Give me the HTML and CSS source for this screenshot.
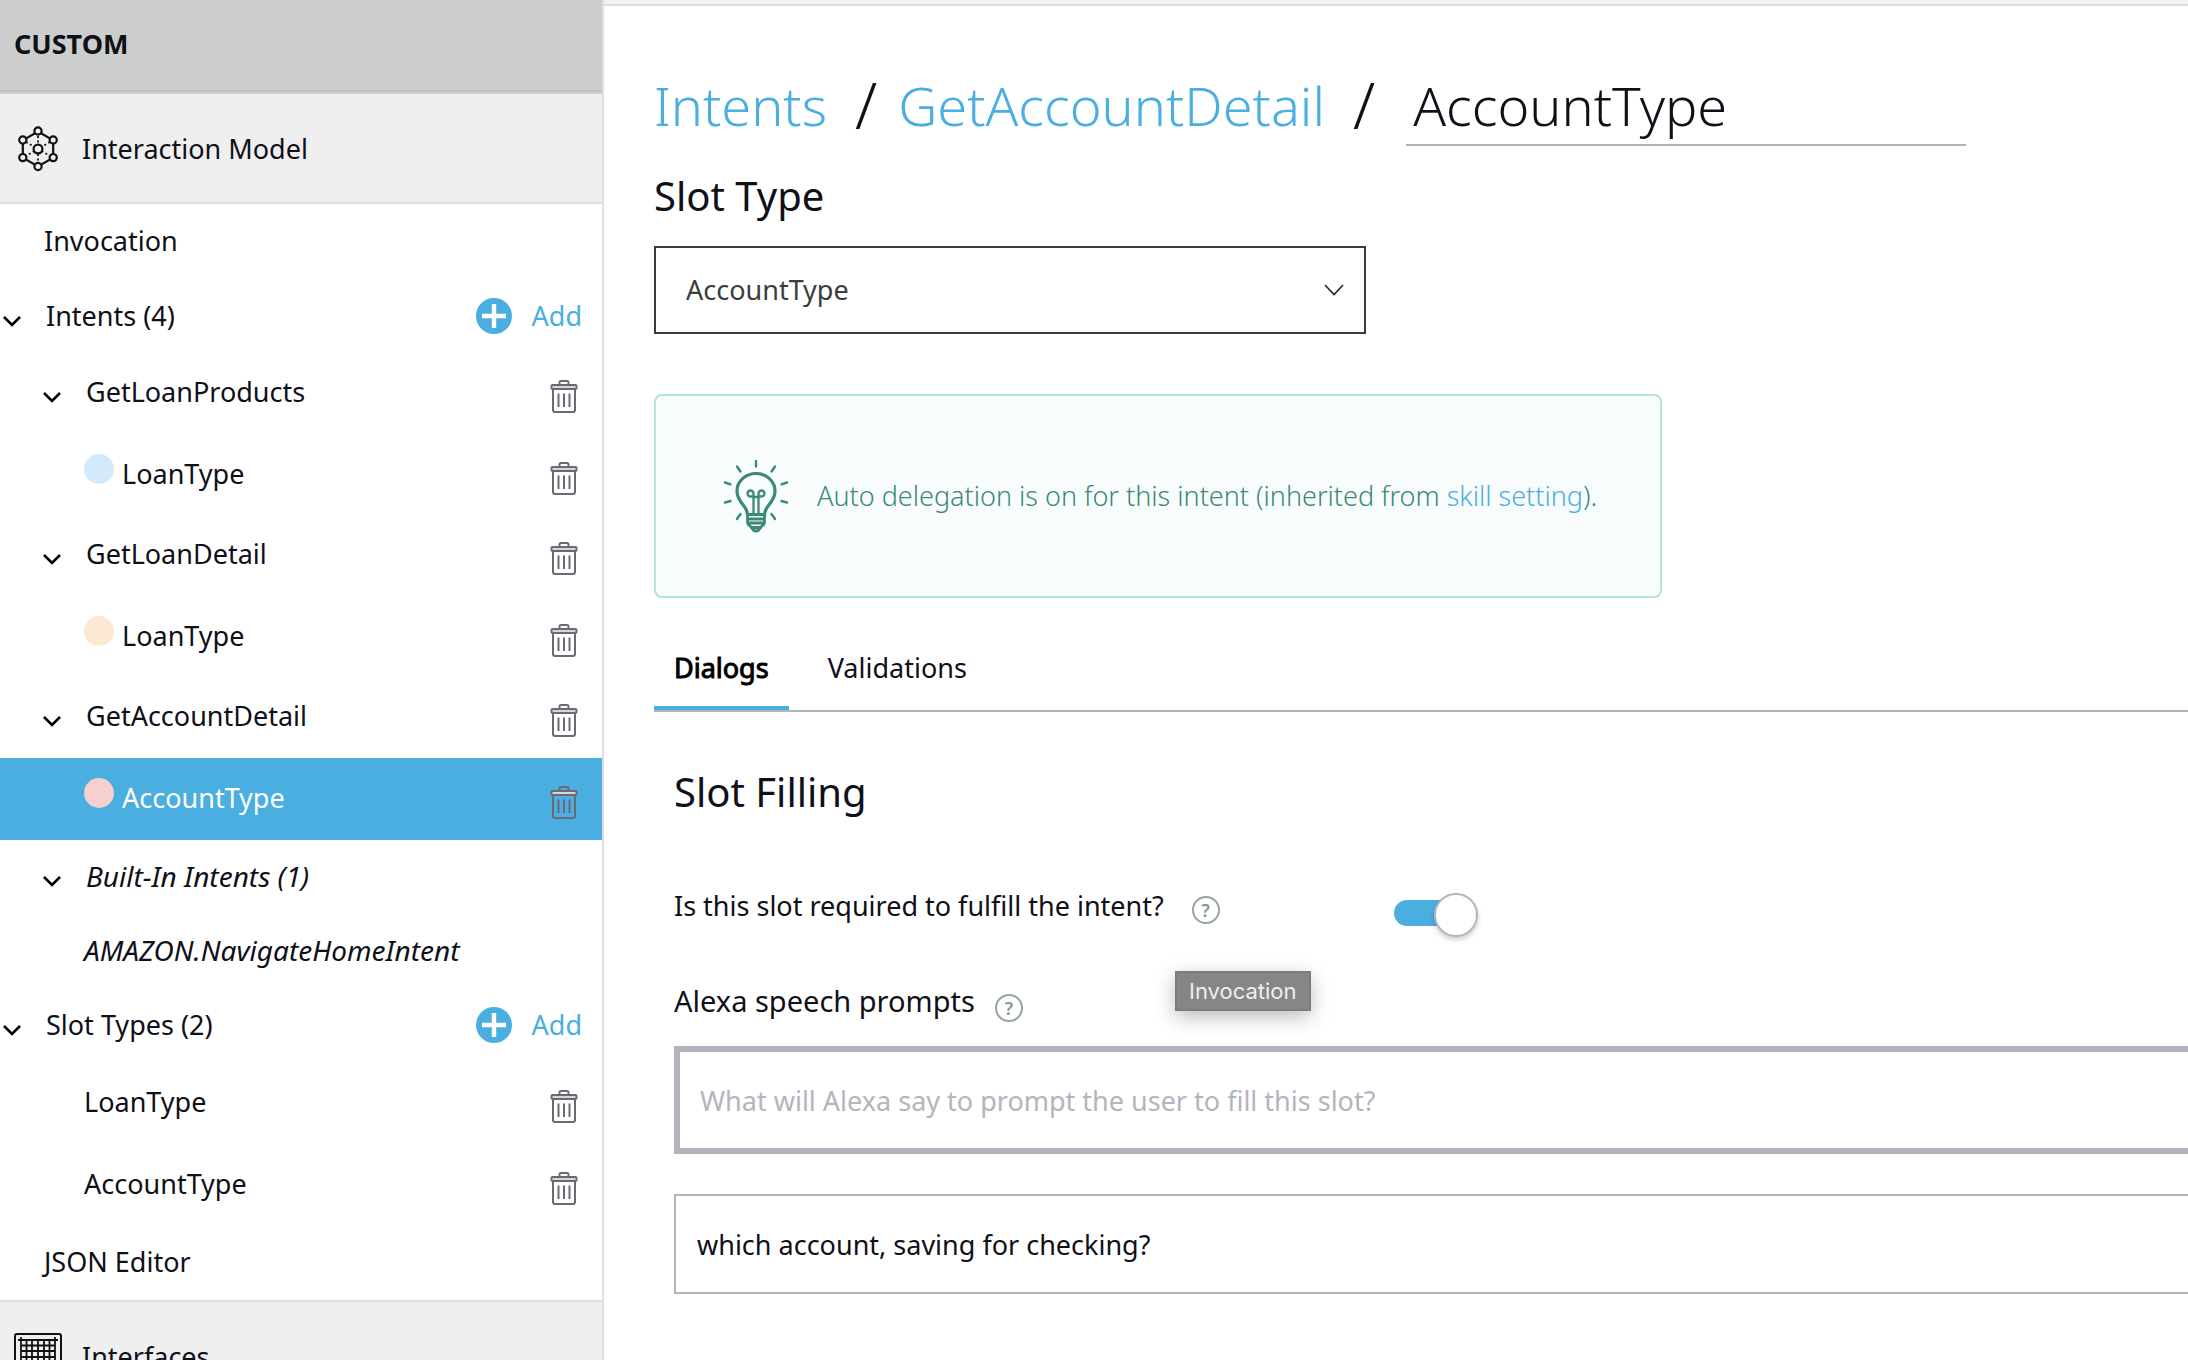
FILE: index.html
```html
<!DOCTYPE html>
<html lang="en">
<head>
<meta charset="utf-8">
<title>AccountType - Slot Type</title>
<link rel="stylesheet" href="styles.css">
</head>
<body>
<svg class="sprite" aria-hidden="true">
  <symbol id="chevron" viewBox="0 0 20 12"><path d="M2 2l8 8 8-8" fill="none" stroke="#000" stroke-width="2.6"/></symbol>
  <symbol id="trash" viewBox="0 0 28 36" fill="none" stroke="#6a6a74" stroke-width="2">
    <path d="M9.500 6V4.500A1.500 1.500 0 0 1 11 3h6a1.500 1.500 0 0 1 1.500 1.500V6"/>
    <path d="M3 11.500V32a2 2 0 0 0 2 2h18a2 2 0 0 0 2-2V11.500"/>
    <rect x="1.500" y="7" width="25" height="4" rx="1" fill="#d4d4d9" class="lid"/>
    <path d="M8.500 15.500v13.500M14 15.500v13.500M19.500 15.500v13.500"/>
  </symbol>
  <symbol id="plus" viewBox="0 0 36 36"><circle cx="18" cy="18" r="18" fill="#4aaee0"/><path d="M18 6v24M6 18h24" stroke="#fff" stroke-width="4.400"/></symbol>
</svg>

<nav class="sidebar">
  <div class="skill">CUSTOM</div>
  <a class="section" href="#model">
    <svg class="section-icon" viewBox="0 0 48 48" fill="none" stroke="#0f1018" stroke-width="2.200">
      <path d="M24 6.500L39.200 15.300V32.700L24 41.500 8.800 32.700V15.300Z"/>
      <path d="M24 11v26M12 17l24 14M36 17L12 31" stroke-dasharray="2 2.500" stroke-width="1.800"/>
      <g fill="#efefef"><circle cx="24" cy="6" r="3.600"/><circle cx="39.200" cy="15" r="3.600"/><circle cx="39.200" cy="32.600" r="3.600"/><circle cx="24" cy="41.500" r="3.600"/><circle cx="8.800" cy="32.600" r="3.600"/><circle cx="8.800" cy="15" r="3.600"/><circle cx="24" cy="24" r="4.400"/></g>
    </svg>
    <span>Interaction Model</span>
  </a>
  <ul class="tree">
    <li class="row short level-1"><a class="name" href="#invocation">Invocation</a></li>
    <li class="row short group">
      <button class="toggle" aria-label="Collapse intents"><svg><use href="#chevron"/></svg></button>
      <a class="name" href="#intents">Intents (4)</a>
      <button class="add"><svg><use href="#plus"/></svg>Add</button>
    </li>
    <li class="row intent">
      <button class="toggle" aria-label="Collapse"><svg><use href="#chevron"/></svg></button>
      <a class="name" href="#glp">GetLoanProducts</a>
      <button class="delete" aria-label="Delete"><svg><use href="#trash"/></svg></button>
    </li>
    <li class="row slot tall"><i class="dot blue"></i><a class="name" href="#lt1">LoanType</a><button class="delete" aria-label="Delete"><svg><use href="#trash"/></svg></button></li>
    <li class="row intent">
      <button class="toggle" aria-label="Collapse"><svg><use href="#chevron"/></svg></button>
      <a class="name" href="#gld">GetLoanDetail</a>
      <button class="delete" aria-label="Delete"><svg><use href="#trash"/></svg></button>
    </li>
    <li class="row slot tall"><i class="dot orange"></i><a class="name" href="#lt2">LoanType</a><button class="delete" aria-label="Delete"><svg><use href="#trash"/></svg></button></li>
    <li class="row intent">
      <button class="toggle" aria-label="Collapse"><svg><use href="#chevron"/></svg></button>
      <a class="name" href="#gad">GetAccountDetail</a>
      <button class="delete" aria-label="Delete"><svg><use href="#trash"/></svg></button>
    </li>
    <li class="row slot tall active"><i class="dot pink"></i><a class="name" href="#at">AccountType</a><button class="delete" aria-label="Delete"><svg><use href="#trash"/></svg></button></li>
    <li class="row intent short builtin">
      <button class="toggle" aria-label="Collapse"><svg><use href="#chevron"/></svg></button>
      <a class="name" href="#builtin">Built-In Intents (1)</a>
    </li>
    <li class="row slot short builtin"><a class="name" href="#home">AMAZON.NavigateHomeIntent</a></li>
    <li class="row short group types">
      <button class="toggle" aria-label="Collapse slot types"><svg><use href="#chevron"/></svg></button>
      <a class="name" href="#types">Slot Types (2)</a>
      <button class="add"><svg><use href="#plus"/></svg>Add</button>
    </li>
    <li class="row slot"><a class="name" href="#type1">LoanType</a><button class="delete" aria-label="Delete"><svg><use href="#trash"/></svg></button></li>
    <li class="row slot tall"><a class="name" href="#type2">AccountType</a><button class="delete" aria-label="Delete"><svg><use href="#trash"/></svg></button></li>
    <li class="row short level-1"><a class="name" href="#json">JSON Editor</a></li>
  </ul>
  <a class="section interfaces" href="#interfaces">
    <svg class="section-icon" viewBox="0 0 48 48" fill="none" stroke="#111">
      <rect x="1" y="1" width="46" height="46" rx="2" stroke-width="2"/>
      <path d="M4 7h40M4 41h40M7 4v40M41 4v40M7 12.500h34M7 18h34M7 24h34M7 30h34M7 35.500h34M12.500 7v34M18 7v34M24 7v34M30 7v34M35.500 7v34" stroke-width="1.800"/>
    </svg>
    <span>Interfaces</span>
  </a>
</nav>

<main class="main">
  <div class="content">
    <h1 class="crumbs">
      <a href="#intents">Intents</a><span class="sep">/</span><a href="#gad">GetAccountDetail</a><span class="sep">/</span>
      <input class="slot-name" aria-label="Slot name" value="AccountType">
    </h1>
    <h2 class="heading"><label for="slot-type">Slot Type</label></h2>
    <div class="select">
      <select id="slot-type"><option>AccountType</option><option>LoanType</option></select>
      <svg viewBox="0 0 20 12"><path d="M1 1l9 9.500L19 1" fill="none" stroke="#222" stroke-width="1.600"/></svg>
    </div>

    <div class="notice">
      <svg viewBox="0 0 66 74" fill="none" stroke="#3a8a75" stroke-width="2.400" stroke-linecap="round">
        <path d="M33 2v5.500M14 7.500l3.500 5M52 7.500l-3.500 5M2 23.500l5.500 1.800M64 23.500l-5.500 1.800M2 43.500l5.500-1.500M64 43.500l-5.500-1.500M14 60l3.500-5M52 60l-3.500-5"/>
        <path d="M24.500 55.500c0-9-10.500-11.500-10.500-23.500a19 17.500 0 0 1 38 0c0 12-10.500 14.500-10.500 23.500z" stroke-width="3.200"/>
        <path d="M24.500 56v7.500c0 3.500 3.500 3 4.500 5.500 1.500 4 6.500 4 8 0 1-2.500 4.500-2 4.500-5.500V56M25 60h16M25 64h16M28 68.500h10" stroke-width="2.800"/>
        <path d="M30.500 55V37.500h-3a3 3 0 1 1 3-3M35.500 55V37.500h3a3 3 0 1 0-3-3M30.500 34v4h5v-4" stroke-width="2.300"/>
      </svg>
      <p>Auto delegation is on for this intent (inherited from <a href="#settings">skill setting</a>).</p>
    </div>

    <div class="tabs" role="tablist">
      <button class="tab selected" role="tab" aria-selected="true">Dialogs</button>
      <button class="tab" role="tab" aria-selected="false">Validations</button>
    </div>

    <section class="panel">
      <h2 class="heading">Slot Filling</h2>
      <div class="field">
        <div class="question">
          <label for="required">Is this slot required to fulfill the intent?</label>
          <button class="help" aria-label="Help">?</button>
        </div>
        <input class="switch" type="checkbox" id="required" checked>
      </div>
      <div class="prompts">
        <label for="prompt">Alexa speech prompts</label>
        <button class="help" aria-label="Help">?</button>
        <span class="tooltip" role="tooltip">Invocation</span>
      </div>
      <input class="prompt new" id="prompt" placeholder="What will Alexa say to prompt the user to fill this slot?">
      <input class="prompt" aria-label="Prompt 1" value="which account, saving for checking?">
    </section>
  </div>
</main>
</body>
</html>
```
FILE: styles.css
```css
* { box-sizing: border-box; }

body {
  display: flex;
  height: 100vh;
  margin: 0;
  overflow: hidden;
  background: #fff;
  color: #0f1018;
  font: 27px/36px "Noto Sans", "Open Sans", sans-serif;
}

a { color: inherit; text-decoration: none; }
button, input, select { margin: 0; padding: 0; border: 0; border-radius: 0; background: none; color: inherit; font: inherit; outline: 0; }
h1, h2, p, ul { margin: 0; padding: 0; }
h1, h2 { font-weight: 400; }
svg { display: block; flex: none; }
.sprite { position: absolute; width: 0; height: 0; }

/* Sidebar */
.sidebar { flex: 0 0 604px; border-right: 2px solid #dfdfdf; }
.skill {
  height: 94px;
  padding: 26px 14px;
  border-bottom: 2px solid #cecfce;
  background: #cccecd;
  box-shadow: inset 0 -2px #c2c3c2;
  font-weight: 700;
}
.section {
  display: flex;
  align-items: center;
  gap: 20px;
  height: 110px;
  padding: 2px 14px 0;
  border-bottom: 2px solid #dfdfdf;
  background: #efefef;
}
.section-icon { width: 48px; height: 48px; }
.section.interfaces { border-top: 2px solid #dfdfdf; border-bottom: 0; }

.tree { list-style: none; }
.row { display: flex; align-items: center; height: 80px; padding: 0 24px 4px 0; }
.row.short { height: 74px; padding-bottom: 2px; }
.row.short:first-child, .row.types { height: 76px; }
.row.tall { height: 82px; padding-bottom: 2px; }
.row.level-1 { padding-left: 44px; }
.row.group { padding-left: 2px; }
.row.intent { padding-left: 42px; }
.row.slot { padding-left: 84px; }
.name { flex: 1; }
.builtin { font-size: 28px; font-style: italic; }
.active { background: #4aaee0; color: #fff; }
.active .lid { fill: none; }

.toggle { width: 20px; margin: 10px 24px 0 0; }
.toggle svg { width: 20px; height: 12px; }
.delete svg { width: 28px; height: 36px; }
.delete { margin-top: 8px; }
.add { display: flex; align-items: center; gap: 20px; margin-right: -4px; color: #4aaee0; }
.add svg { width: 36px; height: 36px; }
.dot { width: 30px; height: 30px; margin: 0 8px 10px 0; border-radius: 50%; }
.blue { background: #d3eafd; }
.orange { background: #fce9d2; }
.pink { background: #f8cfcf; }

/* Main column */
.main { flex: 1; min-width: 0; border-top: 4px solid #f1f1f1; }
.content { padding: 64px 0 0 50px; border-top: 2px solid #dcdcdc; }

.crumbs { display: flex; align-items: flex-start; height: 76px; font-size: 54px; font-weight: 300; line-height: 70px; }
.crumbs a { color: #4aaee0; }
.sep { padding: 0 21px 0 28px; font-size: 64px; }
.slot-name { width: 560px; height: 76px; margin-left: 10px; padding: 0 7px 4px; border-bottom: 2px solid #aab7b8; }

.heading { font-size: 40px; line-height: 48px; }
.crumbs + .heading { margin-top: 26px; }

.select { display: flex; align-items: center; position: relative; width: 712px; margin-top: 26px; }
.select select { appearance: none; width: 100%; height: 88px; padding: 0 60px 0 30px; border: 2px solid #393e3c; color: #393e3c; }
.select svg { position: absolute; right: 22px; width: 20px; height: 12px; pointer-events: none; }

.notice {
  display: flex;
  align-items: center;
  gap: 28px;
  width: 1008px;
  height: 204px;
  margin-top: 60px;
  padding-left: 67px;
  border: 2px solid #b0e8cd;
  border-radius: 8px;
  background: #f9fcfd;
  color: #3a8a75;
  font-weight: 300;
}
.notice svg { width: 66px; height: 74px; }
.notice a { color: #4aaee0; }

.tabs { display: flex; margin-top: 52px; border-bottom: 2px solid #b4b4be; }
.tab { padding: 0 20px 20px; border-bottom: 4px solid transparent; }
.tab.selected { border-color: #4aaee0; color: #000; -webkit-text-stroke: 1px #000; }
.tab + .tab { margin-left: 19px; }

.panel { padding: 56px 0 40px 20px; }
.field { display: flex; align-items: center; height: 40px; margin-top: 70px; }
.question { display: flex; align-items: center; gap: 28px; width: 720px; }
.help {
  width: 28px;
  height: 28px;
  margin-top: 8px;
  border: 2px solid #95a5a6;
  border-radius: 50%;
  color: #849596;
  font-size: 18px;
  font-weight: 600;
  line-height: 24px;
}
.switch { appearance: none; width: 80px; height: 26px; margin-top: 14px; border-radius: 13px; background: linear-gradient(90deg, #4aaee0 60px, transparent 60px); }
.switch::before {
  content: "";
  display: block;
  width: 40px;
  height: 40px;
  margin: -7px 0 0 40px;
  border: 2px solid #b4b4be;
  border-radius: 50%;
  background: #fff;
  box-shadow: 0 3px 5px #0003;
}

.prompts { display: flex; position: relative; align-items: center; gap: 20px; height: 42px; margin: 54px 0 24px; font-size: 29px; }
.prompts .help { margin-top: 14px; }
.tooltip {
  position: absolute;
  top: -9px;
  left: 501px;
  padding: 0 12px;
  border: 2px solid #7c7c7c;
  background: #868686;
  color: #efefef;
  box-shadow: 0 6px 20px #0004;
  font: 22px/36px Inter, sans-serif;
}

.prompt { display: block; width: 100%; height: 100px; padding: 0 21px; border: 2px solid #b4b4be; border-right: 0; }
.prompt.new { height: 108px; margin-bottom: 40px; padding: 0 20px; border-width: 6px; border-right: 0; }
.prompt::placeholder { color: #b4b4be; opacity: 1; }
```
